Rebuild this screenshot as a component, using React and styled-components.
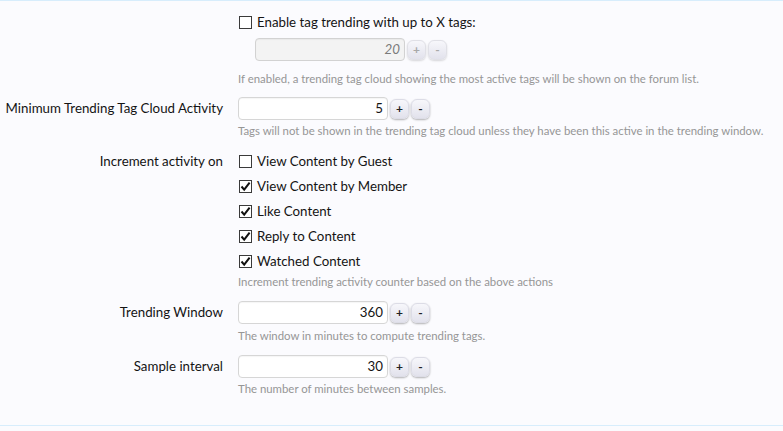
import React from "react";
import styled, { createGlobalStyle } from "styled-components";

const GlobalStyle = createGlobalStyle`
  html, body {
    margin: 0;
    background: #fbfbfe;
  }
  body {
    font-family: Lato, "Liberation Sans", sans-serif;
    color: #141414;
  }
`;

const Form = styled.div`
  width: 783px;
  height: 426px;
  box-sizing: border-box;
  border-top: 1px solid #d7edfc;
  border-bottom: 1px solid #d7edfc;
  padding-top: 12px;
`;

const Row = styled.div`
  display: grid;
  grid-template-columns: 238px 1fr;
  margin-bottom: ${(p) => (p.$tight ? "11px" : "12px")};
  padding-top: ${(p) => (p.$list ? "2px" : "0")};
`;

const Label = styled.div`
  font-size: 13.3px;
  text-align: right;
  padding-right: 15px;
  line-height: ${(p) => (p.$list ? "19px" : "23px")};
`;

const Controls = styled.div`
  display: flex;
  flex-direction: column;
  align-items: flex-start;
`;

const CheckRow = styled.label`
  display: flex;
  align-items: center;
  gap: 5px;
  font-size: 13.3px;
  line-height: 19px;
  margin-bottom: ${(p) => (p.$last ? "0" : "6px")};
  padding-left: 1px;
`;

const Box = styled.span`
  width: 11px;
  height: 11px;
  border: 1px solid #3a3a3a;
  background: #fff;
  display: flex;
  align-items: center;
  justify-content: center;
  svg {
    display: block;
  }
`;

const Spinner = styled.div`
  display: flex;
  align-items: center;
  gap: 2px;
  margin-left: ${(p) => (p.$indent ? "17px" : "0")};
  margin-top: ${(p) => (p.$indent ? "6px" : "0")};
`;

const NumberInput = styled.div`
  width: 150px;
  height: 23px;
  box-sizing: border-box;
  border: 1px solid ${(p) => (p.$disabled ? "#d2d2d2" : "#d6d6d6")};
  border-radius: 4px;
  background: ${(p) => (p.$disabled ? "#f3f3f3" : "#fff")};
  box-shadow: inset 0 1px 1px rgba(0, 0, 0, 0.04);
  font-size: 13.3px;
  line-height: 21px;
  text-align: right;
  padding-right: 4px;
  color: ${(p) => (p.$disabled ? "#7a7a7a" : "#141414")};
  font-style: ${(p) => (p.$disabled ? "italic" : "normal")};
`;

const StepButton = styled.div`
  width: 19px;
  height: 20px;
  box-sizing: border-box;
  border-radius: 6px;
  background: linear-gradient(#f7f7fb, #e2e2ec);
  border: 1px solid ${(p) => (p.$disabled ? "#e0e0e6" : "#dcdce6")};
  box-shadow: 0 1px 2px rgba(0, 0, 0, ${(p) => (p.$disabled ? 0.15 : 0.3)});
  font-size: 12px;
  font-weight: bold;
  line-height: 18px;
  text-align: center;
  color: ${(p) => (p.$disabled ? "#a8a8a8" : "#222")};
`;

const Hint = styled.div`
  font-size: 11.4px;
  line-height: 14px;
  color: #969696;
  margin-top: ${(p) => p.$gap || 4}px;
`;

const Check = () => (
  <svg width="11" height="11" viewBox="0 0 11 11">
    <path d="M1.5 5.5 L4.2 8.6 L9.6 1.6" fill="none" stroke="#111" strokeWidth="2" />
  </svg>
);

const Checkbox = ({ checked, children, last }) => (
  <CheckRow $last={last}>
    <Box>{checked && <Check />}</Box>
    {children}
  </CheckRow>
);

const NumberBox = ({ value, disabled, indent }) => (
  <Spinner $indent={indent}>
    <NumberInput $disabled={disabled}>{value}</NumberInput>
    <StepButton $disabled={disabled}>+</StepButton>
    <StepButton $disabled={disabled}>-</StepButton>
  </Spinner>
);

const actions = [
  { name: "View Content by Guest", checked: false },
  { name: "View Content by Member", checked: true },
  { name: "Like Content", checked: true },
  { name: "Reply to Content", checked: true },
  { name: "Watched Content", checked: true },
];

export default function App() {
  return (
    <>
      <GlobalStyle />
      <Form>
        <Row $tight>
          <Label />
          <Controls>
            <Checkbox last>Enable tag trending with up to X tags:</Checkbox>
            <NumberBox value="20" disabled indent />
            <Hint $gap={11}>
              If enabled, a trending tag cloud showing the most active tags will be shown on the forum list.
            </Hint>
          </Controls>
        </Row>

        <Row>
          <Label>Minimum Trending Tag Cloud Activity</Label>
          <Controls>
            <NumberBox value="5" />
            <Hint>
              Tags will not be shown in the trending tag cloud unless they have been this active in the trending window.
            </Hint>
          </Controls>
        </Row>

        <Row $list>
          <Label $list>Increment activity on</Label>
          <Controls>
            {actions.map((a, i) => (
              <Checkbox key={a.name} checked={a.checked} last={i === actions.length - 1}>
                {a.name}
              </Checkbox>
            ))}
            <Hint $gap={4}>Increment trending activity counter based on the above actions</Hint>
          </Controls>
        </Row>

        <Row>
          <Label>Trending Window</Label>
          <Controls>
            <NumberBox value="360" />
            <Hint $gap={5}>The window in minutes to compute trending tags.</Hint>
          </Controls>
        </Row>

        <Row>
          <Label>Sample interval</Label>
          <Controls>
            <NumberBox value="30" />
            <Hint>The number of minutes between samples.</Hint>
          </Controls>
        </Row>
      </Form>
    </>
  );
}
